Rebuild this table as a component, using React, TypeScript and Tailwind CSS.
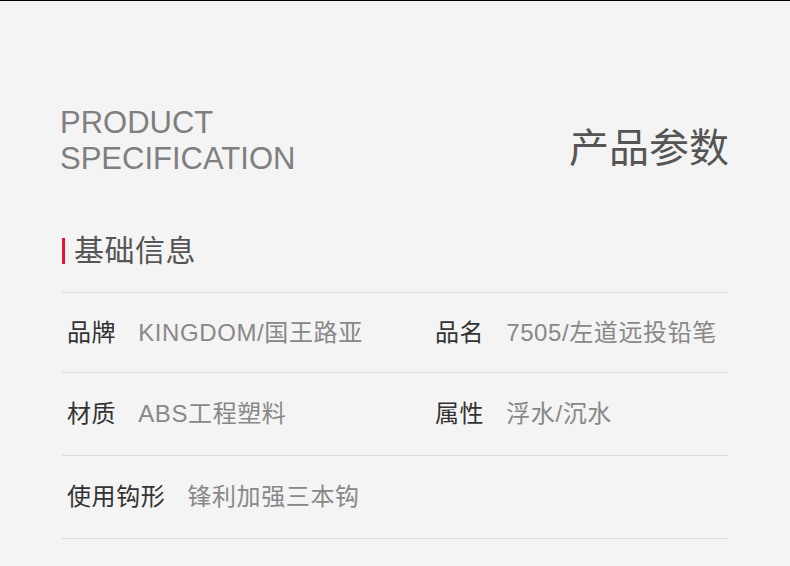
import React from 'react';

interface SpecItem {
  label: string;
  value: string;
}

interface SpecRow {
  height: string;
  items: SpecItem[];
}

const rows: SpecRow[] = [
  {
    height: 'h-[80px]',
    items: [
      { label: '品牌', value: 'KINGDOM/国王路亚' },
      { label: '品名', value: '7505/左道远投铅笔' },
    ],
  },
  {
    height: 'h-[83px]',
    items: [
      { label: '材质', value: 'ABS工程塑料' },
      { label: '属性', value: '浮水/沉水' },
    ],
  },
  {
    height: 'h-[83px]',
    items: [{ label: '使用钩形', value: '锋利加强三本钩' }],
  },
];

const font = "font-['Liberation_Sans','Noto_Sans_CJK_SC',sans-serif]";

export default function App() {
  return (
    <div className={`w-[790px] h-[566px] overflow-hidden bg-[#f4f4f4] border-t border-black px-[60px] ${font}`}>
      <div className="flex justify-between items-start pt-[104px]">
        <div className="text-[31px] leading-[36px] text-[#7f7f7f]">
          <div>PRODUCT</div>
          <div>SPECIFICATION</div>
        </div>
        <div className="mt-[23px] mr-[1px] text-[40px] leading-[40px] text-[#555555]">产品参数</div>
      </div>

      <div className="mx-[2px]">
        <div className="flex items-center h-[30px] mt-[59px] mb-[26px]">
          <span className="w-[3px] h-[26px] bg-[#e8142f]" />
          <span className="ml-[9px] text-[30px] leading-[30px] tracking-[0.5px] text-[#555555]">基础信息</span>
        </div>

        <div className="border-t border-[#dcdcdc]">
          {rows.map((row, i) => (
            <div key={i} className={`grid grid-cols-[368px_1fr] items-center pl-[5px] border-b border-[#dcdcdc] ${row.height}`}>
              {row.items.map((item) => (
                <div key={item.label} className="flex items-center text-[24px] leading-[30px] tracking-[0.6px]">
                  <span className="text-[#333333] mr-[22px]">{item.label}</span>
                  <span className="text-[#888888]">{item.value}</span>
                </div>
              ))}
            </div>
          ))}
        </div>
      </div>
    </div>
  );
}
